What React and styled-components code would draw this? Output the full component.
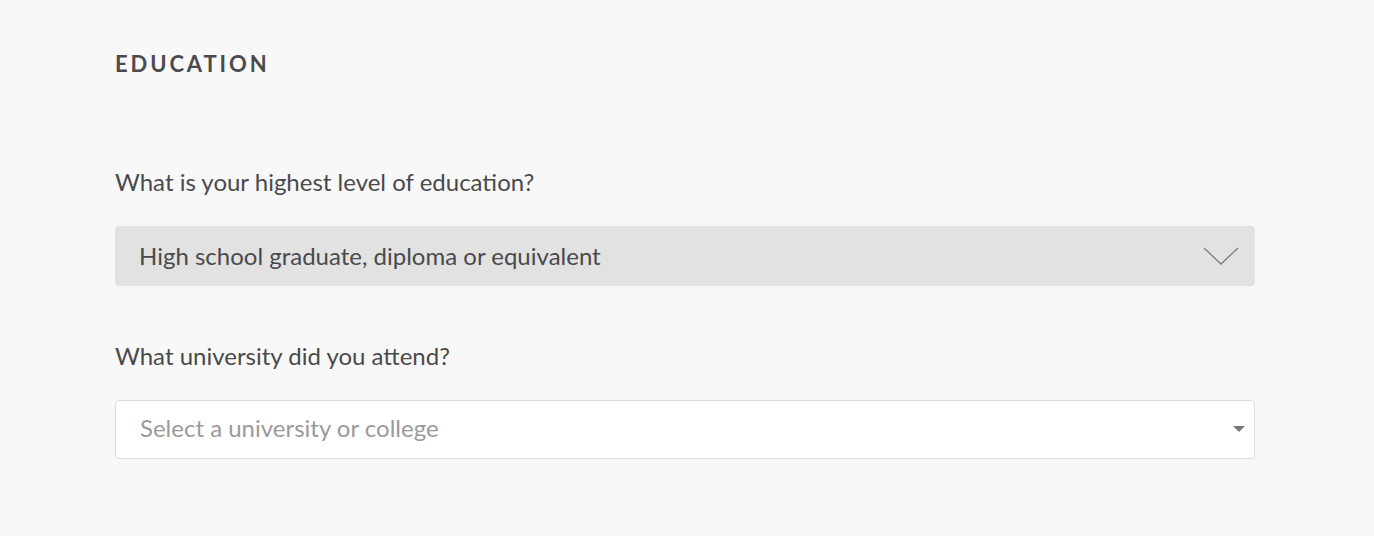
import { createGlobalStyle, styled } from "styled-components";

const GlobalStyle = createGlobalStyle`
  html, body {
    margin: 0;
    padding: 0;
    background: #f8f8f8;
    font-family: Lato, "Open Sans", sans-serif;
  }
`;

const Page = styled.div`
  padding: 50px 0 0 115px;
  width: 1140px;
`;

const Heading = styled.h2`
  margin: 0 0 89px;
  font-size: 22px;
  line-height: 28px;
  font-weight: 700;
  letter-spacing: 2.9px;
  color: #4b4b4d;
`;

const Field = styled.div`
  display: flex;
  flex-direction: column;
  margin-bottom: 55px;
`;

const Label = styled.label`
  font-size: 24px;
  line-height: 30px;
  color: #4a4a4c;
  margin-bottom: 29px;
`;

const SelectBox = styled.div`
  display: flex;
  align-items: center;
  justify-content: space-between;
  box-sizing: border-box;
  height: ${(p) => (p.$filled ? "60px" : "59px")};
  padding: 0 ${(p) => (p.$filled ? "16px" : "9px")} ${(p) => (p.$filled ? "2px" : "4px")} 24px;
  border-radius: 4px;
  background: ${(p) => (p.$filled ? "#e2e2e2" : "#ffffff")};
  border: ${(p) => (p.$filled ? "none" : "1px solid #dddddd")};
  font-size: 24px;
  color: ${(p) => (p.$filled ? "#4a4a4c" : "#9a9a9a")};
`;

const IconSlot = styled.span`
  display: flex;
  margin-top: ${(p) => p.$offset || 0}px;
`;

const Chevron = () => (
  <svg width="36" height="20" viewBox="0 0 36 20">
    <path d="M1 2 L18 18 L35 2" fill="none" stroke="#7d7d7f" strokeWidth="1.3" />
  </svg>
);

const Caret = () => (
  <svg width="12" height="7" viewBox="0 0 12 7">
    <path d="M0 0 H12 L6 6 Z" fill="#777" />
  </svg>
);

export default function App() {
  return (
    <>
      <GlobalStyle />
      <Page>
        <Heading>EDUCATION</Heading>
        <Field>
          <Label>What is your highest level of education?</Label>
          <SelectBox $filled>
            <span>High school graduate, diploma or equivalent</span>
            <IconSlot $offset={2}>
              <Chevron />
            </IconSlot>
          </SelectBox>
        </Field>
        <Field>
          <Label>What university did you attend?</Label>
          <SelectBox>
            <span>Select a university or college</span>
            <IconSlot $offset={4}>
              <Caret />
            </IconSlot>
          </SelectBox>
        </Field>
      </Page>
    </>
  );
}
